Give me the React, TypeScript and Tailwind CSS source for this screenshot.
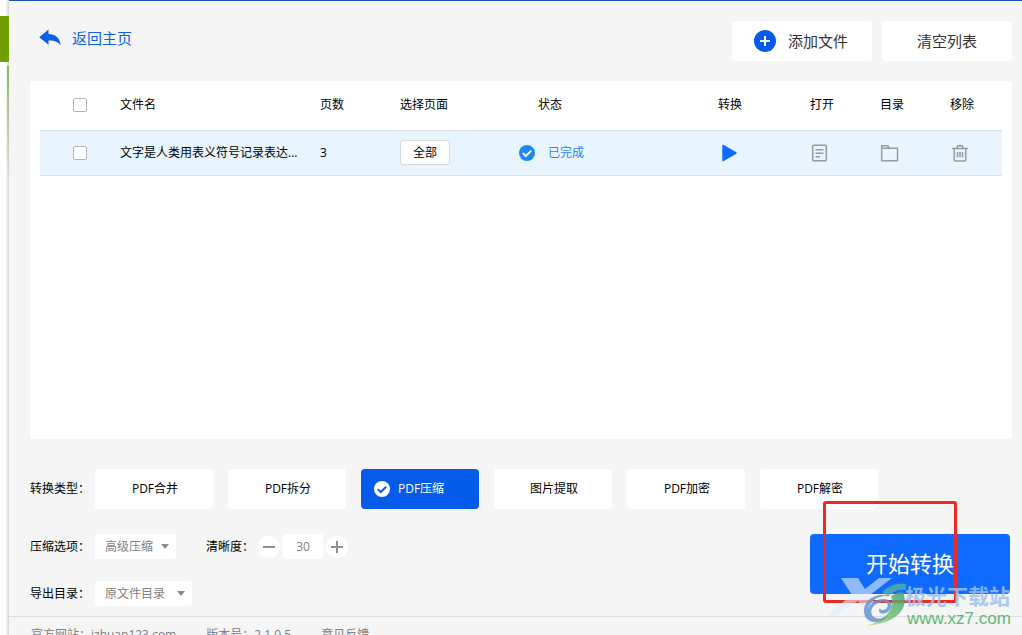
import type { ReactNode } from "react";

const CONVERSIONS = ["PDF合并", "PDF拆分", "PDF压缩", "图片提取", "PDF加密", "PDF解密"];
const ACTIVE = "PDF压缩";

const checkboxClass =
  "block size-[14px] appearance-none rounded-[2px] border border-[#b4b4b4] bg-white checked:bg-[#0a5cf0]";

function ReplyIcon() {
  return (
    <svg className="h-[18px] w-[22px]" viewBox="0 0 22 18" fill="#0f5fe6" aria-hidden="true">
      <path d="M9.5.6v4.3c7.4.3 11.6 4.2 12.2 11.6-2.6-3.6-6.2-5.2-12.2-5v4.3L.2 8.2z" />
    </svg>
  );
}

function PlusBadge() {
  return (
    <svg className="size-[22px]" viewBox="0 0 22 22" aria-hidden="true">
      <circle cx="11" cy="11" r="11" fill="#045bea" />
      <path d="M11 6v10M6 11h10" stroke="#fff" strokeWidth="2" />
    </svg>
  );
}

function CheckBadge({ disc, tick }: { disc: string; tick: string }) {
  return (
    <svg className="size-4" viewBox="0 0 16 16" aria-hidden="true">
      <circle cx="8" cy="8" r="8" fill={disc} />
      <path d="M3.8 8.1l3 2.9 5.5-5.4" fill="none" stroke={tick} strokeWidth="2" />
    </svg>
  );
}

function RowIcon({ children }: { children: ReactNode }) {
  return (
    <svg
      className="size-5"
      viewBox="0 0 20 20"
      fill="none"
      stroke="#949ba2"
      strokeWidth="1.5"
      strokeLinejoin="round"
      aria-hidden="true"
    >
      {children}
    </svg>
  );
}

function Dropdown({ id, value, width }: { id: string; value: string; width: string }) {
  return (
    <div className={`grid items-center ${width}`}>
      <select
        id={id}
        className="col-start-1 row-start-1 h-[25px] w-full appearance-none rounded-[4px] bg-white pl-[10px] text-[12px] text-[#808080]"
      >
        <option>{value}</option>
      </select>
      <svg
        className="pointer-events-none col-start-1 row-start-1 mr-[7px] h-[5px] w-2 justify-self-end"
        viewBox="0 0 8 5"
        fill="#8c8c8c"
        aria-hidden="true"
      >
        <path d="M0 0h8L4 5z" />
      </svg>
    </div>
  );
}

function Watermark() {
  return (
    <div className="pointer-events-none absolute top-[43px] left-[17px] h-[54px] w-[190px]">
      <svg className="absolute inset-0 h-[54px] w-[100px]" viewBox="0 0 100 54" aria-hidden="true">
        <defs>
          <linearGradient id="swoosh" x1="1" y1="0" x2="0" y2="1">
            <stop offset="0" stopColor="#3f9d7c" />
            <stop offset="0.6" stopColor="#74c46a" />
            <stop offset="1" stopColor="#d3e08a" />
          </linearGradient>
        </defs>
        <path
          d="M14 1h17l7 11L52 1h13L43 18l6 10H34l-3-4L8 39H-2l27-21z"
          fill="#e4effd"
          opacity=".6"
        />
        <path d="M55 15c7-7 16-9 24-8v6c-8-1-13 2-18 7z" fill="#5cb0a0" opacity=".75" />
        <path d="M75 14c9 15-4 33-37 35 19-4 31-17 26-30z" fill="url(#swoosh)" opacity=".85" />
        <path
          d="M62 19c-13-4-26 4-25 16 1 12 17 14 24 3-5 4-13 5-16 0-3-6 3-13 12-13 4 0 5 4 2 7-3 2-6 1-6-1-3 4 1 7 6 5 7-3 8-12-1-14-9-1-17 5-17 12 0-9 9-16 21-15z"
          fill="#6794cf"
          opacity=".85"
        />
      </svg>
      <span className="absolute top-[7px] left-[78px] text-[21px] leading-[24px] font-bold whitespace-nowrap text-[#9cc0f2]/85">
        极光下载站
      </span>
      <span className="absolute top-[32px] left-[80px] font-['Liberation_Sans',sans-serif] text-[17px] leading-[20px] whitespace-nowrap text-[#5dba76]">
        www.xz7.com
      </span>
    </div>
  );
}

export default function App() {
  return (
    <div className="flex h-screen overflow-hidden bg-white font-['Open_Sans','Noto_Sans_CJK_SC',sans-serif] text-[12px] leading-[18px] text-black">
      <div className="flex w-[9px] shrink-0 flex-col bg-linear-to-r from-white from-60% to-[#d4d4d2] pt-4">
        <div className="h-[46px] bg-[#70a000]" />
        <div className="mt-1 ml-[7px] h-[110px] bg-linear-to-b from-[#8fb55a] to-transparent" />
      </div>

      <div className="flex min-w-0 flex-1 flex-col border-t border-[#1f52b5] bg-[#f5f5f5]">
        <header className="flex items-center gap-[10px] pt-5 pr-[10px] pl-[30px]">
          <a href="#home" className="mr-auto mb-[6px] flex items-center gap-[11px] text-[15px] text-[#0f5fe6]">
            <ReplyIcon />
            返回主页
          </a>
          <button className="flex h-10 w-[140px] items-center justify-center gap-3 rounded-[4px] bg-white pr-[2px] text-[15px] text-[#333]">
            <PlusBadge />
            添加文件
          </button>
          <button className="h-10 w-[130px] rounded-[4px] bg-white text-[15px] text-[#333]">清空列表</button>
        </header>

        <main className="flex min-h-0 flex-1 flex-col pt-5 pr-[10px] pl-[21px]">
          <section className="min-h-0 flex-1 rounded-[4px] bg-white px-[10px]">
            <table className="w-full table-fixed text-left">
              <colgroup>
                <col className="w-20" />
                <col className="w-[200px]" />
                <col className="w-20" />
                <col className="w-[97px]" />
                <col />
                <col className="w-[91px]" />
                <col className="w-[70px]" />
                <col className="w-[70px]" />
                <col className="w-[75px]" />
              </colgroup>
              <thead>
                <tr className="h-[49px] border-b border-[#d9e2ea] *:p-0 *:font-normal">
                  <th>
                    <input type="checkbox" aria-label="全选" className={`ml-[33px] ${checkboxClass}`} />
                  </th>
                  <th>文件名</th>
                  <th>页数</th>
                  <th>选择页面</th>
                  <th>
                    <span className="pl-[41px]">状态</span>
                  </th>
                  <th>
                    <span className="pl-[22px]">转换</span>
                  </th>
                  <th>
                    <span className="pl-[23px]">打开</span>
                  </th>
                  <th>
                    <span className="pl-[23px]">目录</span>
                  </th>
                  <th>
                    <span className="pl-[23px]">移除</span>
                  </th>
                </tr>
              </thead>
              <tbody>
                <tr className="h-[45px] border-b border-[#d9e2ea] bg-[#e8f4fe] *:p-0">
                  <td>
                    <input type="checkbox" aria-label="选择文件" className={`ml-[33px] ${checkboxClass}`} />
                  </td>
                  <td className="whitespace-nowrap">文字是人类用表义符号记录表达...</td>
                  <td>3</td>
                  <td>
                    <button className="block h-[25px] w-[50px] rounded-[3px] border border-[#d5dade] bg-white">
                      全部
                    </button>
                  </td>
                  <td>
                    <span className="flex items-center gap-[13px] pl-[22px] text-[#1a88f8]">
                      <CheckBadge disc="#1a88f8" tick="#fff" />
                      已完成
                    </span>
                  </td>
                  <td>
                    <button aria-label="转换" className="ml-[22px] block">
                      <svg className="size-5" viewBox="0 0 20 20" aria-hidden="true">
                        <path
                          d="M5 2.5l13 7.5L5 17.5z"
                          fill="#0f6bff"
                          stroke="#0f6bff"
                          strokeWidth="1.5"
                          strokeLinejoin="round"
                        />
                      </svg>
                    </button>
                  </td>
                  <td>
                    <button aria-label="打开" className="ml-[22px] block">
                      <RowIcon>
                        <rect x="3.7" y="2.2" width="13.6" height="15.6" rx="1" />
                        <path d="M6.5 6.7h8M6.5 10.2h8M6.5 13.7h4.5" />
                      </RowIcon>
                    </button>
                  </td>
                  <td>
                    <button aria-label="目录" className="ml-[22px] block">
                      <RowIcon>
                        <path d="M2.7 17.7V2.7h6l1.8 2.6h8v12.4zM2.7 5.3h8" />
                      </RowIcon>
                    </button>
                  </td>
                  <td>
                    <button aria-label="移除" className="ml-[22px] block">
                      <RowIcon>
                        <path d="M3 5.5h16M8 5.2c0-3.6 6-3.6 6 0M5.2 5.5v11.2q0 1.3 1.3 1.3h9q1.3 0 1.3-1.3V5.5M8.5 9v5.5M11 9v5.5M13.5 9v5.5" />
                      </RowIcon>
                    </button>
                  </td>
                </tr>
              </tbody>
            </table>
          </section>

          <div className="flex items-center pt-[30px]">
            <span className="w-[65px] shrink-0">转换类型：</span>
            <div className="flex gap-[15px]">
              {CONVERSIONS.map((name) =>
                name === ACTIVE ? (
                  <button
                    key={name}
                    aria-pressed="true"
                    className="flex h-10 w-[118px] items-center gap-2 rounded-[4px] bg-[#045bea] pl-[13px] text-white"
                  >
                    <CheckBadge disc="#fff" tick="#045bea" />
                    {name}
                  </button>
                ) : (
                  <button key={name} className="h-10 w-[118px] rounded-[4px] bg-white pl-[2px]">
                    {name}
                  </button>
                ),
              )}
            </div>
          </div>

          <div className="flex items-start justify-between pt-[25px] pr-[2px] pb-[10px]">
            <div className="flex flex-col gap-[22px]">
              <div className="flex items-center">
                <label htmlFor="level" className="w-[65px]">
                  压缩选项：
                </label>
                <Dropdown id="level" value="高级压缩" width="w-[81px]" />
                <label htmlFor="clarity" className="ml-[30px] w-[52px] whitespace-nowrap">
                  清晰度：
                </label>
                <div className="flex items-center gap-[3px]">
                  <button aria-label="降低" className="size-[22px] rounded-full bg-white">
                    <svg viewBox="0 0 22 22" stroke="#909090" strokeWidth="2" aria-hidden="true">
                      <path d="M5 11h12" />
                    </svg>
                  </button>
                  <input
                    id="clarity"
                    defaultValue="30"
                    className="h-[25px] w-10 rounded-[4px] bg-white text-center text-[#808080]"
                  />
                  <button aria-label="提高" className="size-[22px] rounded-full bg-white">
                    <svg viewBox="0 0 22 22" stroke="#909090" strokeWidth="2" aria-hidden="true">
                      <path d="M5 11h12M11 5v12" />
                    </svg>
                  </button>
                </div>
              </div>
              <div className="flex items-center">
                <label htmlFor="folder" className="w-[65px]">
                  导出目录：
                </label>
                <Dropdown id="folder" value="原文件目录" width="w-[97px]" />
              </div>
            </div>

            <div className="relative">
              <button className="block h-[60px] w-[200px] rounded-[4px] bg-[#0f6bff] pb-[3px] text-[22px] text-white">
                开始转换
              </button>
              <div className="pointer-events-none absolute -top-[33px] left-[13px] h-[102px] w-[134px] rounded-[3px] border-3 border-[#ea2a23]" />
              <Watermark />
            </div>
          </div>
        </main>

        <footer className="flex h-[19px] shrink-0 gap-[30px] overflow-hidden border-t border-[#dcdcdc] pt-[9px] pl-[22px] whitespace-nowrap text-[#808080]">
          <span>官方网站：jzhuan123.com</span>
          <span>版本号：2.1.0.5</span>
          <a href="#feedback">意见反馈</a>
        </footer>
      </div>
    </div>
  );
}
